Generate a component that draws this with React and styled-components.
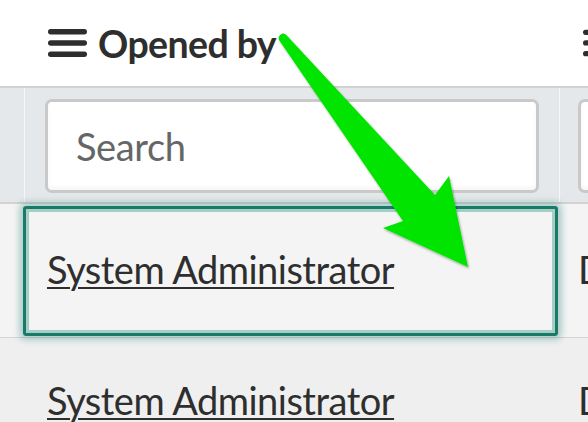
import React from "react";
import styled, { createGlobalStyle } from "styled-components";

const GlobalStyle = createGlobalStyle`
  html, body {
    margin: 0;
    padding: 0;
    background: #ffffff;
    overflow: hidden;
  }
  body {
    font-family: "Lato", "Open Sans", sans-serif;
    color: #2e2e2e;
  }
`;

const Page = styled.div`
  position: relative;
  width: 588px;
  height: 422px;
  overflow: hidden;
  background: #efefef;
`;

const Row = styled.div`
  display: grid;
  grid-template-columns: 25px 535px 60px;
  height: ${(p) => p.$height}px;
  background: ${(p) => p.$bg};
  border-bottom: ${(p) => p.$border || "none"};
`;

const HeaderCell = styled.div`
  display: flex;
  align-items: center;
  gap: 11px;
  padding-left: 23px;
  font-size: 37.5px;
  font-weight: 700;
  letter-spacing: -0.6px;
  color: #2e2e2e;
`;

const FilterCell = styled.div`
  display: flex;
  align-items: center;
  padding: 0 ${(p) => p.$right ?? 20}px 0 ${(p) => p.$left ?? 20}px;
  border-right: ${(p) => (p.$divider ? "1px solid #f4f6f7" : "none")};
`;

const SearchBox = styled.div`
  box-sizing: border-box;
  width: 100%;
  height: 94px;
  margin-top: 2px;
  margin-left: ${(p) => p.$shift || 0}px;
  background: #ffffff;
  border: 3px solid #c9c9c9;
  border-radius: 7px;
  box-shadow: inset 0 -3px 4px rgba(0, 0, 0, 0.04);
  display: flex;
  align-items: center;
  padding-left: 28px;
  font-size: 38px;
  letter-spacing: -0.4px;
  color: #666666;
`;

const DataCell = styled.div`
  position: relative;
  display: flex;
  align-items: center;
  padding-left: ${(p) => p.$pad ?? 22}px;
  padding-bottom: 4px;
  font-size: 38px;
  letter-spacing: -0.5px;
  color: #2e2e2e;
  white-space: nowrap;
`;

const Selected = styled.div`
  position: absolute;
  left: -2px;
  right: 2px;
  top: 2px;
  bottom: 1px;
  border: 3px solid #1a7a6a;
  border-radius: 3px;
  box-shadow: inset 0 0 0 3px #a5cfc5, 0 0 6px 4px rgba(31, 126, 111, 0.32);
  pointer-events: none;
`;

const Link = styled.span`
  text-decoration: underline;
  text-decoration-thickness: 2px;
  text-underline-offset: 3px;
`;

const Overlay = styled.svg`
  position: absolute;
  left: 0;
  top: 0;
  width: 588px;
  height: 422px;
  pointer-events: none;
`;

function MenuIcon() {
  return (
    <svg width="39" height="28" viewBox="0 0 39 28">
      <rect x="0" y="0" width="39" height="5.5" rx="2.7" fill="#2e2e2e" />
      <rect x="0" y="11.2" width="39" height="5.5" rx="2.7" fill="#2e2e2e" />
      <rect x="0" y="22.4" width="39" height="5.5" rx="2.7" fill="#2e2e2e" />
    </svg>
  );
}

export default function App() {
  return (
    <Page>
      <GlobalStyle />
      <Row $height={86} $bg="#ffffff" $border="2px solid #d2d2d2">
        <div />
        <HeaderCell>
          <MenuIcon />
          Opened by
        </HeaderCell>
        <HeaderCell>
          <MenuIcon />
        </HeaderCell>
      </Row>
      <Row $height={114} $bg="#e4e8eb" $border="2px solid #d2d2d2">
        <FilterCell $left={0} $right={18} $divider>
          <SearchBox $shift={-40} />
        </FilterCell>
        <FilterCell $divider>
          <SearchBox>Search</SearchBox>
        </FilterCell>
        <FilterCell $left={18}>
          <SearchBox />
        </FilterCell>
      </Row>
      <Row $height={133} $bg="#f4f4f4" $border="1px solid #d4d4d4">
        <div />
        <DataCell>
          <Selected />
          <Link>System Administrator</Link>
        </DataCell>
        <DataCell $pad={18}>D</DataCell>
      </Row>
      <Row $height={128} $bg="#efefef">
        <div />
        <DataCell>
          <Link>System Administrator</Link>
        </DataCell>
        <DataCell $pad={18}>D</DataCell>
      </Row>
      <Overlay viewBox="0 0 588 422">
        <defs>
          <filter id="arrowShadow" x="-10%" y="-10%" width="120%" height="120%">
            <feDropShadow dx="1" dy="1.5" stdDeviation="1.2" floodColor="#000" floodOpacity="0.35" />
          </filter>
        </defs>
        <path
          d="M279.5 40.8 A4.5 4.5 0 0 1 286.5 35.2 L435 195 L449 176 L468 267 L383 228 L403 221 Z"
          fill="#00e400"
          filter="url(#arrowShadow)"
        />
      </Overlay>
    </Page>
  );
}
